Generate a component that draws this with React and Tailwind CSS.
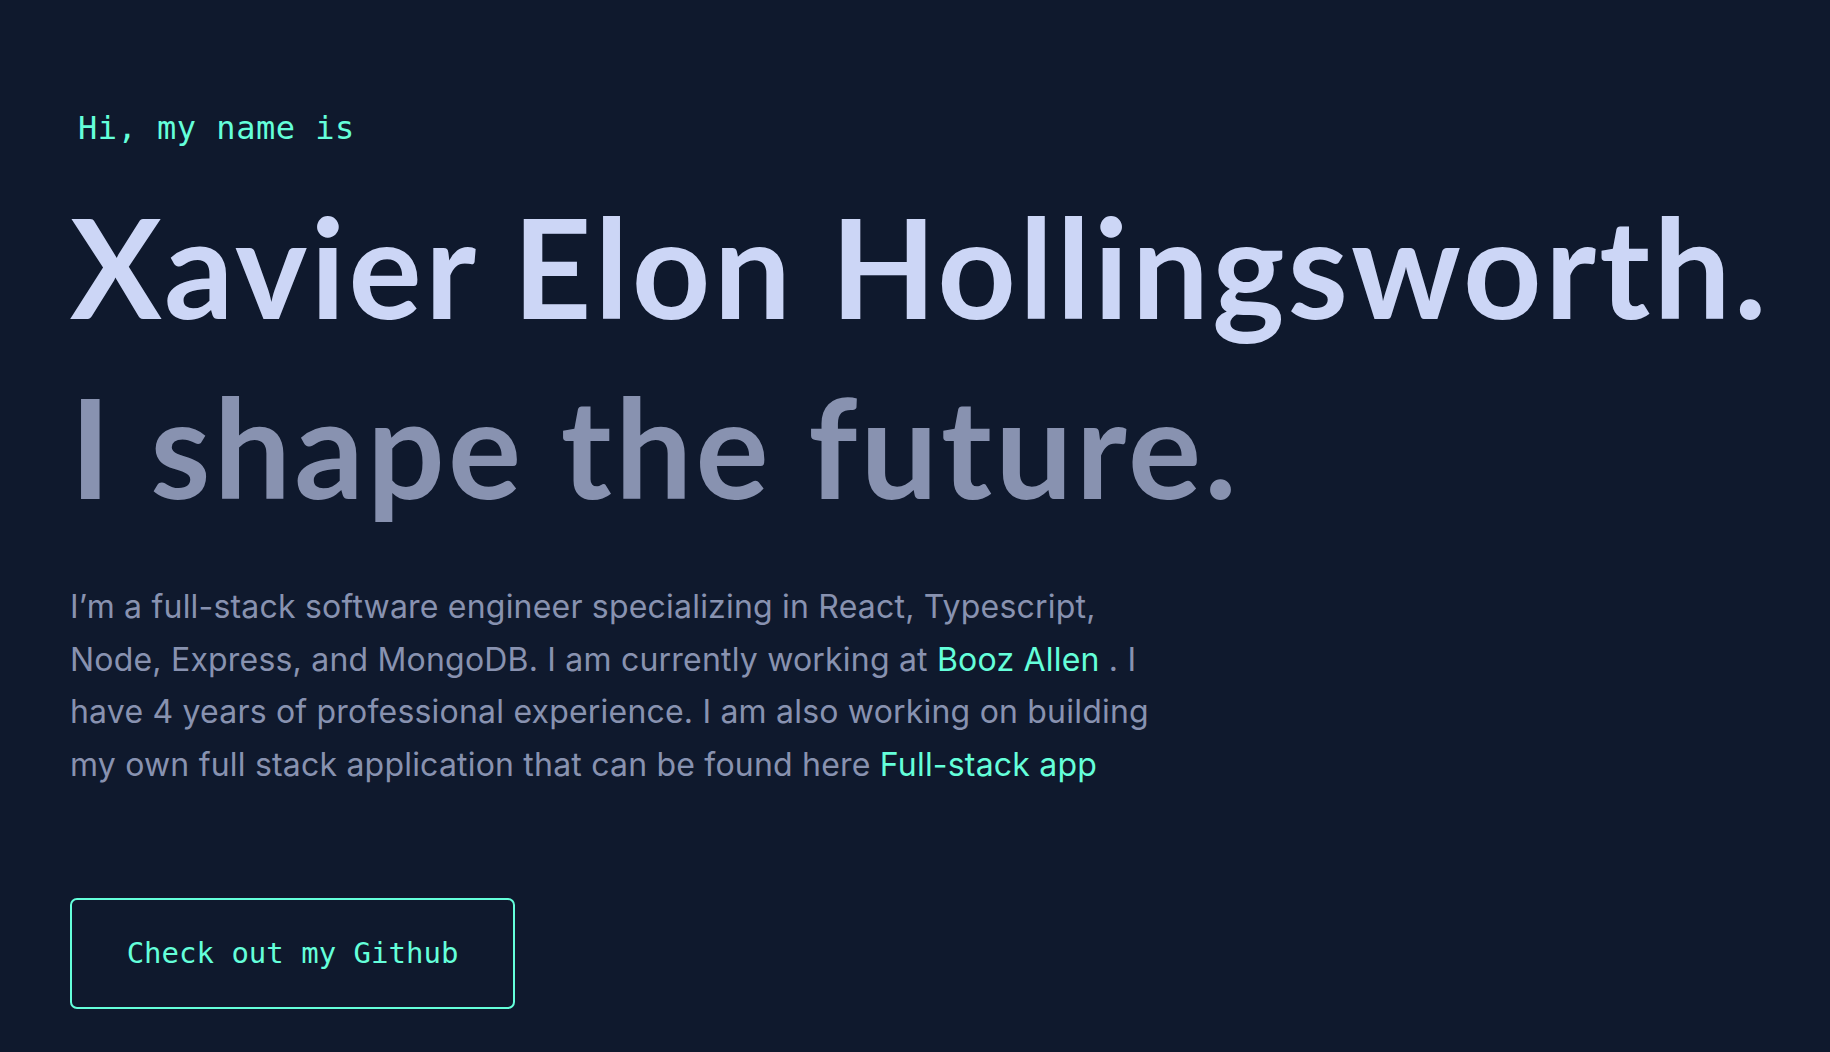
import React from 'react';

export default function App() {
    return (
        <div className="min-h-[1052px] w-full bg-[#0f192d] px-[70px] pt-[106px]">
            {/* intro */}
            <p className="font-['DejaVu_Sans_Mono',monospace] text-[32px] leading-[44px] tracking-[0.5px] text-[#64ffda] pl-[8px]">
                Hi, my name is
            </p>
            <h1 className="mt-[26px] font-['Lato',sans-serif] font-bold text-[137px] leading-[180px] tracking-[3.2px] text-[#ccd6f6] whitespace-nowrap">
                Xavier Elon Hollingsworth.
            </h1>
            <h2 className="font-['Lato',sans-serif] font-bold text-[137px] leading-[180px] tracking-[3.2px] text-[#8892b0] whitespace-nowrap">
                I shape the future.
            </h2>
            <p className="mt-[45px] max-w-[1100px] font-['Inter',sans-serif] text-[32px] leading-[52.5px] tracking-[0.2px] text-[#8892b0]">
                I’m a full-stack software engineer specializing in React, Typescript, Node, Express, and MongoDB. I am currently working at{' '}
                <a className="text-[#64ffda]">Booz Allen</a> . I have 4 years of professional experience. I am also working on building my own full stack application that can be found here{' '}
                <a className="text-[#64ffda]">Full-stack app</a>
            </p>
            <button className="mt-[107px] w-[445px] h-[111px] rounded-[7px] border-2 border-[#64ffda] font-['DejaVu_Sans_Mono',monospace] text-[29px] text-[#64ffda]">
                Check out my Github
            </button>
        </div>
    );
}
